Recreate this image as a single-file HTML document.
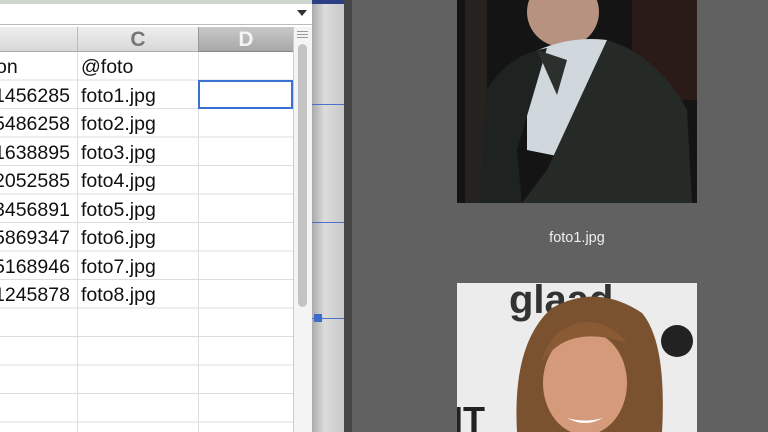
<!DOCTYPE html>
<html><head><style>
*{margin:0;padding:0;box-sizing:border-box}
body{width:768px;height:432px;overflow:hidden;background:#616161;position:relative;font-family:"Liberation Sans",sans-serif}
.a{position:absolute}
.cell{position:absolute;font-size:19.5px;color:#111;line-height:28px}
</style></head><body>
<div class="a" style="left:0;top:0;width:312px;height:432px;background:#fff"></div>
<div class="a" style="left:0;top:0;width:312px;height:4px;background:#cfd6cf"></div>
<div class="a" style="left:0;top:4px;width:312px;height:21px;background:#fff;border-bottom:1px solid #bbb"></div>
<div class="a" style="left:297px;top:10px;width:0;height:0;border-left:5px solid transparent;border-right:5px solid transparent;border-top:6px solid #333"></div>
<div class="a" style="left:0;top:27px;width:77px;height:25px;background:linear-gradient(#eee,#d8d8d8);border-bottom:1px solid #aaa"></div>
<div class="a" style="left:77px;top:27px;width:121px;height:25px;background:linear-gradient(#eee,#d8d8d8);border-left:1px solid #bbb;border-bottom:1px solid #aaa;text-align:center;font:bold 21px 'Liberation Sans';color:#777;line-height:25px">C</div>
<div class="a" style="left:198px;top:27px;width:95px;height:25px;background:linear-gradient(#c8c8c8,#a8a8a8);border-left:1px solid #999;border-bottom:1px solid #888;text-align:center;font:bold 21px 'Liberation Sans';color:#f4f4f4;line-height:25px">D</div>
<div class="a" style="left:293px;top:27px;width:19px;height:405px;background:#f4f4f4;border-left:1px solid #ccc"></div>
<div class="a" style="left:297px;top:31px;width:11px;height:1px;background:#999;box-shadow:0 3px #999,0 6px #999"></div>
<div class="a" style="left:298px;top:44px;width:9px;height:263px;background:#c4c4c4;border-radius:5px"></div>
<div class="a" style="left:0;top:52px;width:293px;height:380px;background:repeating-linear-gradient(#fff 0,#fff 27.5px,#ddd 27.5px,#ddd 28.5px)"></div>
<div class="a" style="left:77px;top:52px;width:1px;height:380px;background:#ddd"></div>
<div class="a" style="left:198px;top:52px;width:1px;height:380px;background:#ddd"></div>
<div class="a" style="left:198px;top:80px;width:95px;height:29px;border:2px solid #3c6fd0"></div>
<div class="cell" style="left:-4px;top:53px">on</div>
<div class="cell" style="left:81px;top:53px">@foto</div>
<div class="cell" style="left:-6px;top:82px">1456285</div><div class="cell" style="left:81px;top:82px">foto1.jpg</div>
<div class="cell" style="left:-6px;top:110px">5486258</div><div class="cell" style="left:81px;top:110px">foto2.jpg</div>
<div class="cell" style="left:-6px;top:139px">1638895</div><div class="cell" style="left:81px;top:139px">foto3.jpg</div>
<div class="cell" style="left:-6px;top:167px">2052585</div><div class="cell" style="left:81px;top:167px">foto4.jpg</div>
<div class="cell" style="left:-6px;top:196px">3456891</div><div class="cell" style="left:81px;top:196px">foto5.jpg</div>
<div class="cell" style="left:-6px;top:224px">5869347</div><div class="cell" style="left:81px;top:224px">foto6.jpg</div>
<div class="cell" style="left:-6px;top:253px">5168946</div><div class="cell" style="left:81px;top:253px">foto7.jpg</div>
<div class="cell" style="left:-6px;top:281px">1245878</div><div class="cell" style="left:81px;top:281px">foto8.jpg</div>
<div class="a" style="left:312px;top:0;width:32px;height:432px;background:linear-gradient(90deg,#aaa,#dcdcdc 40%,#c8c8c8)"></div>
<div class="a" style="left:312px;top:0;width:32px;height:4px;background:#2a3f86"></div>
<div class="a" style="left:312px;top:104px;width:32px;height:1px;background:#4a72c8"></div>
<div class="a" style="left:312px;top:222px;width:32px;height:1px;background:#4a72c8"></div>
<div class="a" style="left:312px;top:318px;width:32px;height:1px;background:#4a72c8"></div>
<div class="a" style="left:314px;top:314px;width:8px;height:8px;background:#3a6cc8"></div>
<div class="a" style="left:344px;top:0;width:8px;height:432px;background:#454545"></div>
<svg class="a" style="left:457px;top:0" width="240" height="203">
<rect width="240" height="203" fill="#141414"/>
<rect x="8" y="0" width="22" height="203" fill="#262220"/>
<rect x="175" y="0" width="65" height="100" fill="#2a1a18"/>
<ellipse cx="106" cy="12" rx="36" ry="35" fill="#b89280"/>
<path d="M70 55 Q110 35 150 40 L160 70 L120 160 L70 150Z" fill="#d0d8de"/>
<path d="M22 203 L30 90 Q50 55 90 48 L60 150 L65 203Z" fill="#1e2220"/>
<path d="M150 40 Q200 55 230 110 L235 203 L65 203 L90 170Z" fill="#252a27"/>
<path d="M80 50 L100 95 L110 60Z" fill="#2c302d"/>
</svg>
<div class="a" style="left:457px;top:230px;width:240px;text-align:center;color:#eee;font-size:14.5px">foto1.jpg</div>
<svg class="a" style="left:457px;top:283px" width="240" height="149">
<rect width="240" height="149" fill="#ececec"/>
<text x="52" y="30" font-family="Liberation Sans" font-weight="bold" font-size="40" fill="#333">glaad</text>
<circle cx="220" cy="58" r="16" fill="#222"/>
<text x="-4" y="149" font-family="Liberation Sans" font-weight="bold" font-size="36" fill="#222">IT</text>
<path d="M60 149 Q55 60 95 25 Q140 0 185 30 Q210 60 205 149Z" fill="#7a5230"/>
<ellipse cx="128" cy="100" rx="42" ry="52" fill="#d49a7a"/>
<path d="M85 80 Q110 40 170 60 Q150 35 120 40 Q90 50 85 80Z" fill="#8a5a34"/>
<path d="M110 135 Q128 145 146 135 Q128 140 110 135Z" fill="#fff"/>
</svg>
</body></html>
